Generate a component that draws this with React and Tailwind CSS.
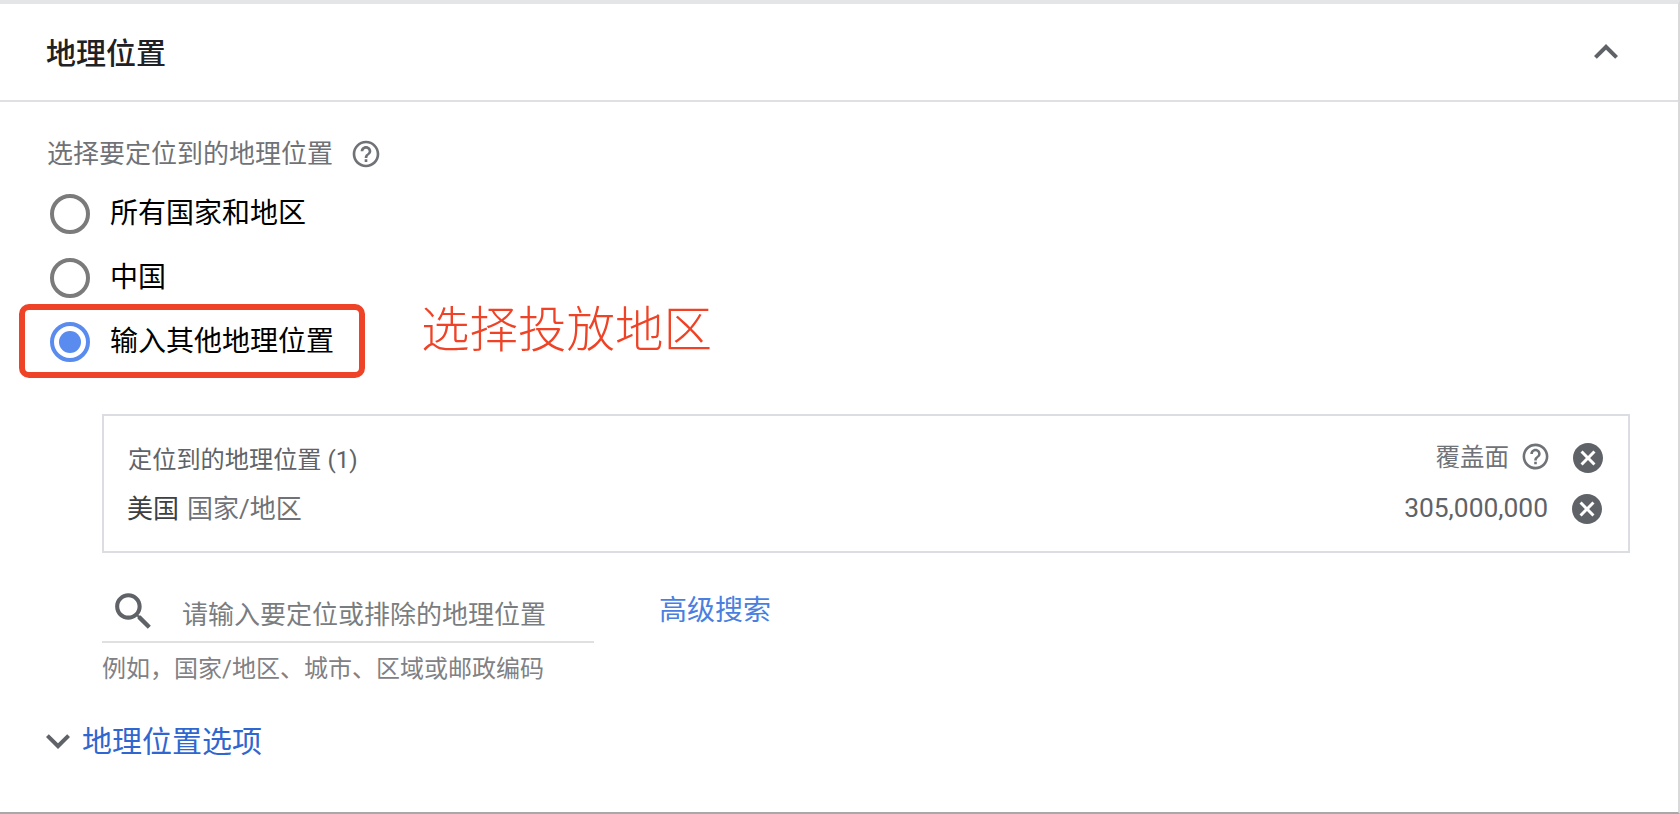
import React from 'react';

const FONT = 'font-[Roboto,"Noto_Sans_CJK_SC",sans-serif]';

const HELP = 'M11 18h2v-2h-2v2zm1-16C6.48 2 2 6.48 2 12s4.48 10 10 10 10-4.48 10-10S17.52 2 12 2zm0 18c-4.41 0-8-3.59-8-8s3.59-8 8-8 8 3.59 8 8-3.59 8-8 8zm0-14c-2.21 0-4 1.79-4 4h2c0-1.1.9-2 2-2s2 .9 2 2c0 2-3 1.75-3 5h2c0-2.25 3-2.5 3-5 0-2.21-1.79-4-4-4z';
const CANCEL = 'M12 2C6.47 2 2 6.47 2 12s4.47 10 10 10 10-4.47 10-10S17.53 2 12 2zm5 13.59L15.59 17 12 13.41 8.41 17 7 15.59 10.59 12 7 8.41 8.41 7 12 10.59 15.59 7 17 8.41 13.41 12 17 15.59z';
const SEARCH = 'M15.5 14h-.79l-.28-.27C15.41 12.59 16 11.11 16 9.5 16 5.91 13.09 3 9.5 3S3 5.91 3 9.5 5.91 16 9.5 16c1.61 0 3.09-.59 4.23-1.57l.27.28v.79l5 4.99L20.49 19l-4.99-5zm-6 0C7.01 14 5 11.99 5 9.5S7.01 5 9.5 5 14 7.01 14 9.5 11.99 14 9.5 14z';
const UP = 'M12 8l-6 6 1.41 1.41L12 10.83l4.59 4.58L18 14z';
const DOWN = 'M16.59 8.59L12 13.17 7.41 8.59 6 10l6 6 6-6z';

const Icon = ({ d, className }) => (
  <svg viewBox="0 0 24 24" fill="currentColor" className={className}>
    <path d={d} />
  </svg>
);

const Radio = ({ label, checked }) => (
  <div className="flex h-16 items-center">
    <div className={`flex h-10 w-10 items-center justify-center rounded-full border-4 ${checked ? 'border-[#5a8bee]' : 'border-[#7b7b7b]'}`}>
      {checked && <div className="h-[22px] w-[22px] rounded-full bg-[#5a8bee]" />}
    </div>
    <span className="ml-5 text-[28px] leading-none text-black">{label}</span>
  </div>
);

export default function App() {
  return (
    <div className={`${FONT} relative h-[814px] w-full overflow-hidden border-t-4 border-r-2 border-b-2 border-t-[#e4e5e7] border-r-[#d9d9d9] border-b-[#a8a8a8] bg-white`}>
      {/* Header */}
      <div className="flex h-[98px] items-center justify-between border-b-2 border-[#dfe0e3] pr-[48px] pl-[46px]">
        <h2 className="pt-[4px] text-[30px] leading-none font-medium text-[#202124]">地理位置</h2>
        <Icon d={UP} className="h-12 w-12 text-[#5f6368]" />
      </div>

      <div className="pt-[32px] pl-[47px]">
        <div className="flex h-10 items-center text-[26px] leading-none text-[#6f7276]">
          选择要定位到的地理位置
          <Icon d={HELP} className="ml-[17px] h-[32px] w-[32px] text-[#6f7276]" />
        </div>

        <div className="mt-[8px] pl-[3px]">
          <Radio label="所有国家和地区" />
          <Radio label="中国" />
          <Radio label="输入其他地理位置" checked />
        </div>

        {/* Targeted locations */}
        <div className="mt-[40px] mr-[48px] ml-[55px] flex h-[139px] flex-col justify-center border-2 border-[#dcdde2] pr-[22px] pl-[23px]">
          <div className="flex h-[50px] items-center justify-between">
            <span className="pt-[6px] pl-[1px] text-[24.2px] leading-none text-[#5f6368]">
              定位到的地理位置 (1)
            </span>
            <div className="flex items-center text-[24.5px] leading-none text-[#6f7276]">
              <span className="pt-[2px]">覆盖面</span>
              <Icon d={HELP} className="mb-[3px] ml-[11px] h-[31px] w-[31px]" />
              <Icon d={CANCEL} className="ml-[19px] h-9 w-9 text-[#5f6368]" />
            </div>
          </div>
          <div className="flex h-[52px] items-center justify-between">
            <span className="text-[26px] leading-none text-[#3c4043]">
              美国<span className="ml-2 text-[#6f7276]">国家/地区</span>
            </span>
            <div className="flex items-center">
              <span className="text-[26.4px] leading-none text-[#5f6368]">305,000,000</span>
              <Icon d={CANCEL} className="mr-[1px] ml-[21px] h-9 w-9 text-[#5f6368]" />
            </div>
          </div>
        </div>

        {/* Search */}
        <div className="mt-[32px] ml-[55px] flex items-start">
          <div>
            <div className="flex h-[58px] w-[492px] items-center border-b-2 border-[#e0e0e0] pl-[7px]">
              <Icon d={SEARCH} className="mb-[3px] h-[49px] w-[49px] text-[#5f6368]" />
              <span className="mt-[3px] ml-[24px] text-[26px] leading-none text-[#7a7d80]">请输入要定位或排除的地理位置</span>
            </div>
            <div className="mt-[14px] text-[24px] leading-none text-[#7f8184]">例如{'\uFF0C'}国家/地区、城市、区域或邮政编码</div>
          </div>
          <span className="mt-[12px] ml-[65px] text-[28px] leading-none text-[#4a7fe0]">高级搜索</span>
        </div>

        <div className="mt-[36px] -ml-[13px] flex items-center">
          <Icon d={DOWN} className="h-12 w-12 text-[#5f6368]" />
          <span className="mt-[1px] text-[30px] leading-none text-[#2f66d0]">地理位置选项</span>
        </div>
      </div>

      {/* Red annotation over the screenshot */}
      <div className="absolute top-[300px] left-[19px] h-[74px] w-[346px] rounded-[10px] border-[6px] border-[#ee4326]" />
      <div className="absolute top-[303px] left-[421px] text-[48.5px] leading-[48px] font-light text-[#ee4326]">选择投放地区</div>
    </div>
  );
}
